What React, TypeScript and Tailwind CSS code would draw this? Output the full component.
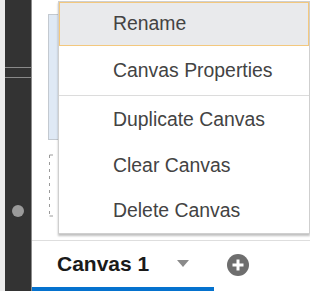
import React from "react";

export default function App() {
  const font = { fontFamily: '"Liberation Sans", Arial, sans-serif' };
  return (
    <div className="relative w-[310px] h-[291px] overflow-hidden bg-white flex" style={font}>
      <div className="w-[5px] h-full bg-[#ececec]" />
      <div className="w-[27px] h-full bg-[#333333] border-r border-[#8c8c8c] flex flex-col items-center">
        <div className="mt-[67px] w-full h-px bg-[#8a8a8a]" />
        <div className="mt-[9px] w-full h-px bg-[#8a8a8a]" />
        <div className="mt-[127px] w-3 h-3 rounded-full bg-[#9a9a9a]" />
      </div>
      <div className="flex-1 flex flex-col">
        <div className="flex-1 flex flex-col pl-[16px] pt-[14px]">
          <div className="w-[40px] h-[126px] bg-[#dfe9f5] border border-[#c3c9d0]" />
          <svg width="12" height="64" className="mt-[14px]" viewBox="0 0 12 64">
            <path d="M1.5 1 H5" stroke="#9a9a9a" strokeWidth="1" />
            <path d="M1.5 1 V62" stroke="#9a9a9a" strokeWidth="1" strokeDasharray="3 4" />
            <path d="M1.5 62 H5" stroke="#9a9a9a" strokeWidth="1" />
          </svg>
        </div>
        <div className="h-[51px] border-t border-[#dedede] flex items-stretch">
          <div className="w-[182px] border-b-4 border-[#0572ce] flex items-center pl-[25px]">
            <span className="text-[21px] font-bold text-[#1a1a1a]">Canvas 1</span>
            <svg width="12" height="8" viewBox="0 0 12 8" className="ml-[28px]">
              <path d="M0 0 H12 L6 7 Z" fill="#8a8a8a" />
            </svg>
          </div>
          <div className="flex items-center pl-[13px] pb-[2px]">
            <svg width="22" height="22" viewBox="0 0 22 22">
              <circle cx="11" cy="11" r="11" fill="#6e6e6e" />
              <path d="M11 5.5 V16.5 M5.5 11 H16.5" stroke="#ffffff" strokeWidth="3" />
            </svg>
          </div>
        </div>
      </div>

      <div className="absolute left-[58px] top-[1px] w-[252px] bg-white border border-[#cfcfcf] shadow-[0_2px_2px_rgba(0,0,0,0.25)] text-[19.4px] text-[#434343]">
        <div className="h-[44px] bg-[#e9eaec] border border-[#f3c87e] flex items-center pl-[53px]">Rename</div>
        <div className="h-[49px] flex items-center pl-[54px]">Canvas Properties</div>
        <div className="h-px bg-[#dcdcdc]" />
        <div className="h-[47px] flex items-center pl-[54px]">Duplicate Canvas</div>
        <div className="h-[45px] flex items-center pl-[54px]">Clear Canvas</div>
        <div className="h-[45px] flex items-center pl-[54px]">Delete Canvas</div>
      </div>
    </div>
  );
}
